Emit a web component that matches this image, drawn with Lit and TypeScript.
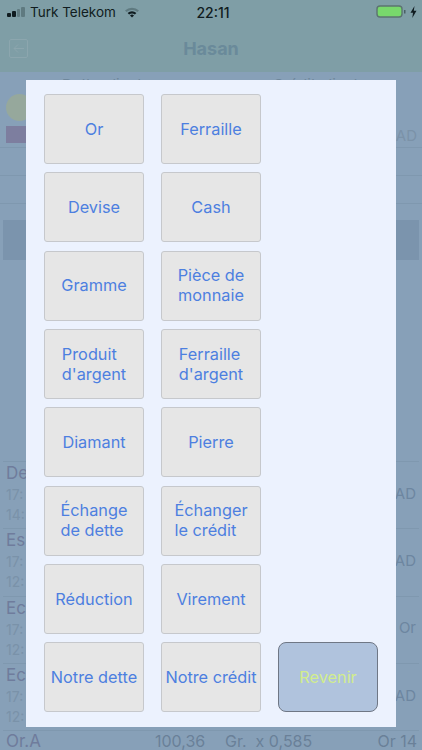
import { LitElement, html, css } from "lit";
import { customElement } from "lit/decorators.js";

// [label, kind]: kind "l" breaks after the first word and left-aligns the lines inside a centred block
const buttons: [string, string][] = [
  ["Or", ""], ["Ferraille", ""], ["", ""],
  ["Devise", ""], ["Cash", ""], ["", ""],
  ["Gramme", ""], ["Pièce de monnaie", ""], ["", ""],
  ["Produit d'argent", "l"], ["Ferraille d'argent", "l"], ["", ""],
  ["Diamant", ""], ["Pierre", ""], ["", ""],
  ["Échange de dette", "l"], ["Échanger le crédit", "l"], ["", ""],
  ["Réduction", ""], ["Virement", ""], ["", ""],
  ["Notre dette", ""], ["Notre crédit", ""], ["Revenir", "r"],
];

const rows: [string, string, string, string][] = [
  ["De", "17:", "14:", "AD"],
  ["Es", "17:", "12:", "AD"],
  ["Ec", "17:", "12:", "Or"],
  ["Ec", "17:", "12:", "AD"],
];

@customElement("app-root")
export class AppRoot extends LitElement {
  static styles = css`
    :host {
      display: block;
      position: relative;
      width: 422px;
      height: 750px;
      overflow: hidden;
      background: #87a0b8;
      font-family: Inter, "Liberation Sans", sans-serif;
    }
    .top {
      height: 72px;
      background: #7f9ea6;
      display: flex;
      flex-direction: column;
    }
    .status {
      height: 24px;
      display: flex;
      align-items: center;
      padding: 0 5px 0 7px;
      color: #101c20;
      font-size: 13.5px;
      position: relative;
    }
    .signal { display: flex; align-items: flex-end; gap: 1px; height: 10px; margin-right: 5px; }
    .signal i { display: block; width: 3.75px; background: #101c20; border-radius: 1px; }
    .signal i.off { background: #5f7a80; }
    .carrier { margin-right: 8px; white-space: nowrap; }
    .time {
      position: absolute; left: 4px; right: 0; text-align: center;
      font-size: 14px; font-weight: 500;
    }
    .right { margin-left: auto; display: flex; align-items: center; gap: 3px; }
    .nav { flex: 1; display: flex; align-items: center; position: relative; padding-left: 9px; }
    .back {
      width: 17px; height: 17px; border: 1px solid #8ca6ae; border-radius: 2px;
      display: flex; align-items: center; justify-content: center;
    }
    .title {
      position: absolute; left: 0; right: 0; text-align: center;
      color: #6a8a9a; font-size: 18px; font-weight: 700;
    }
    .heads {
      display: flex; height: 21px; overflow: hidden;
      color: #6f879c; font-size: 15px; padding-left: 62px;
      white-space: nowrap; align-items: flex-start; padding-top: 3px;
      box-sizing: border-box;
    }
    .heads span:first-child { width: 211px; }
    .client {
      height: 55px; padding: 1px 6px 0; position: relative;
      border-bottom: 1px solid #7f98af;
      display: flex; flex-direction: column; gap: 5px; box-sizing: border-box;
    }
    .avatar { width: 27px; height: 27px; border-radius: 50%; background: #96a89c; }
    .tag { width: 20px; height: 17px; background: #7d7e9f; }
    .ad { position: absolute; right: 5px; top: 33px; color: #7b92a8; font-size: 15px; line-height: 20px; }
    .line-row { height: 28px; border-bottom: 1px solid #7f98af; box-sizing: border-box; }
    .band { height: 40px; margin: 16px 3px 0; background: #7b94ad; }
    .gap { height: 201px; }
    .rows { margin: 0 3px; border-top: 1px solid #7f98af; }
    .row {
      height: 67.3px; box-sizing: border-box; padding: 0 3px;
      display: flex; justify-content: space-between; align-items: center;
      border-bottom: 1px solid #7f98af;
    }
    .meta { display: flex; flex-direction: column; align-self: flex-start; gap: 1px; }
    .name { font-size: 17px; color: #6f7c9c; line-height: 22px; }
    .line { font-size: 14px; color: #7a92a9; line-height: 19px; }
    .unit { font-size: 15px; color: #6d86a0; padding-bottom: 4px; }
    .foot {
      display: flex; align-items: center; height: 20px; padding: 0 5px 0 6px;
      font-size: 16px; line-height: 18px; color: #6a8098;
    }
    .foot .lead { color: #6f7c9c; font-size: 17px; width: 149px; }
    .foot .mid { width: 70px; }
    .foot .end { margin-left: auto; }

    .modal {
      position: absolute;
      left: 26px; top: 80px;
      width: 370px; height: 647px;
      box-sizing: border-box;
      background: #ecf2fe;
      padding: 14px 18px 0;
      display: grid;
      grid-template-columns: repeat(3, 100px);
      grid-auto-rows: 70px;
      column-gap: 17px;
      row-gap: 8.35px;
    }
    .btn {
      box-sizing: border-box;
      display: flex; align-items: center; justify-content: center;
      text-align: center;
      background: #e6e6e6;
      border: 1px solid #c6c8cc;
      border-radius: 3px;
      color: #4d7fe0;
      font-size: 16.3px;
      line-height: 20px;
      padding: 0 0 1px;
    }
    .btn.l { text-align: left; }
    .btn.r {
      background: #b0c3dd;
      border: 1px solid #6f7785;
      border-radius: 8px;
      color: #d2ed8d;
    }
  `;

  private label(t: string, k: string) {
    if (k !== "l") return html`<div class="btn ${k}">${t}</div>`;
    const i = t.indexOf(" ");
    return html`<div class="btn l"><span>${t.slice(0, i)}<br />${t.slice(i + 1)}</span></div>`;
  }

  render() {
    return html`
      <div class="top">
        <div class="status">
          <span class="signal">
            <i style="height:4px"></i><i style="height:6px"></i><i class="off" style="height:8px"></i><i class="off" style="height:10px"></i>
          </span>
          <span class="carrier">Turk Telekom</span>
          <svg width="16" height="12" viewBox="0 0 16 12">
            <path d="M1 4.5 A10 10 0 0 1 15 4.5 L13.4 6 A8 8 0 0 0 2.6 6 Z" fill="#5f7a80"/>
            <path d="M3.6 7 A6.6 6.6 0 0 1 12.4 7 L10.9 8.6 A4.5 4.5 0 0 0 5.1 8.6 Z" fill="#101c20"/>
            <path d="M6 9.4 A3 3 0 0 1 10 9.4 L8 11.5 Z" fill="#101c20"/>
          </svg>
          <span class="time">22:11</span>
          <span class="right">
            <svg width="31" height="14" viewBox="0 0 31 14">
              <rect x="1" y="1" width="25" height="11" rx="3" fill="#78d86c" stroke="#5c7470" stroke-width="1.4"/>
              <rect x="28" y="5" width="1.5" height="3.5" fill="#4a6064"/>
            </svg>
            <svg width="7" height="12" viewBox="0 0 7 12"><path d="M4.5 0 L0.5 6.8 H3 L2.3 12 L6.5 4.8 H3.8 Z" fill="#101c20"/></svg>
          </span>
        </div>
        <div class="nav">
          <span class="back">
            <svg width="13" height="11" viewBox="0 0 13 11" fill="none" stroke="#8ca6ae" stroke-width="1"><path d="M12 5.5 H2 M6 1.5 L2 5.5 L6 9.5"/></svg>
          </span>
          <span class="title">Hasan</span>
        </div>
      </div>
      <div class="heads"><span>Dette client</span><span>Crédit client</span></div>
      <div class="client">
        <div class="avatar"></div>
        <div class="tag"></div>
        <span class="ad">AD</span>
      </div>
      <div class="line-row"></div>
      <div class="line-row"></div>
      <div class="band"></div>
      <div class="gap"></div>
      <div class="rows">
        ${rows.map(
          ([n, a, b, u]) => html`
            <div class="row">
              <div class="meta">
                <span class="name">${n}</span>
                <span class="line">${a}</span>
                <span class="line">${b}</span>
              </div>
              <span class="unit">${u}</span>
            </div>
          `
        )}
      </div>
      <div class="foot">
        <span class="lead">Or.A</span>
        <span class="mid">100,36</span>
        <span>Gr.&nbsp;&nbsp;x 0,585</span>
        <span class="end">Or 14</span>
      </div>
      <div class="modal">
        ${buttons.map(([t, k]) => (t ? this.label(t, k) : html`<div></div>`))}
      </div>
    `;
  }
}
